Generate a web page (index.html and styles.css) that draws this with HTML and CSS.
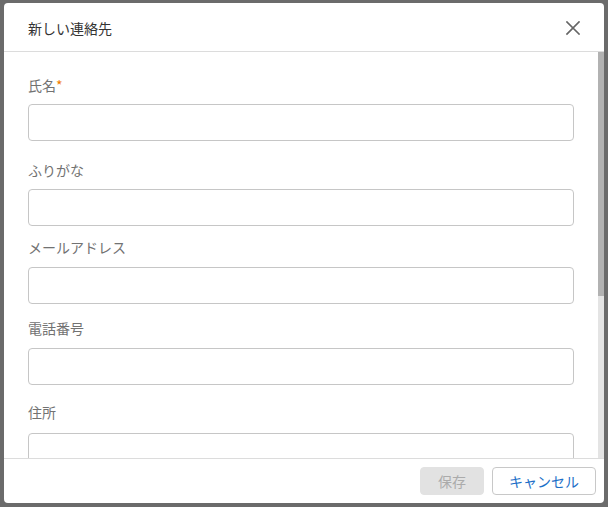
FILE: index.html
```html
<!DOCTYPE html>
<html lang="ja">
<head>
<meta charset="utf-8">
<title>新しい連絡先</title>
<link rel="stylesheet" href="styles.css">
</head>
<body>
<div class="backdrop">
  <div class="dialog">
    <header class="dialog-header">
      <h1 class="dialog-title">新しい連絡先</h1>
      <button class="close-btn" aria-label="閉じる">
        <svg width="16" height="16" viewBox="0 0 16 16"><path d="M2 2 L14 14 M14 2 L2 14" stroke="#666" stroke-width="1.7" fill="none" stroke-linecap="square"/></svg>
      </button>
    </header>
    <div class="dialog-body">
      <div class="form-area">
        <div class="field f1">
          <label class="label">氏名<span class="req">*</span></label>
          <div class="input"></div>
        </div>
        <div class="field f2">
          <label class="label">ふりがな</label>
          <div class="input"></div>
        </div>
        <div class="field f3">
          <label class="label">メールアドレス</label>
          <div class="input"></div>
        </div>
        <div class="field f4">
          <label class="label">電話番号</label>
          <div class="input"></div>
        </div>
        <div class="field f5">
          <label class="label">住所</label>
          <div class="input"></div>
        </div>
      </div>
      <div class="scroll-track"><div class="scroll-thumb"></div></div>
    </div>
    <footer class="dialog-footer">
      <button class="btn btn-save" disabled>保存</button>
      <button class="btn btn-cancel">キャンセル</button>
    </footer>
  </div>
</div>
</body>
</html>
```

FILE: styles.css
```css
html, body {
  margin: 0;
  padding: 0;
  height: 507px;
  overflow: hidden;
}
body {
  background: #6b6b6b;
  font-family: "Noto Sans CJK JP", "Noto Sans", sans-serif;
}
.backdrop {
  padding: 3px 4px 0 4px;
}
.dialog {
  width: 600px;
  height: 500px;
  background: #fff;
  border-radius: 4px;
  display: flex;
  flex-direction: column;
  overflow: hidden;
}
.dialog-header {
  height: 48px;
  flex: 0 0 48px;
  border-bottom: 1px solid #dcdcdc;
  display: flex;
  align-items: center;
  justify-content: space-between;
  padding: 0 23px 0 24px;
}
.dialog-title {
  margin: 0;
  font-size: 14px;
  font-weight: normal;
  color: #333;
  line-height: 20px;
  padding-top: 1px;
}
.close-btn {
  border: none;
  background: none;
  padding: 0;
  width: 16px;
  height: 16px;
  display: flex;
  margin-top: 1px;
}
.dialog-body {
  flex: 1;
  display: flex;
  overflow: hidden;
}
.form-area {
  flex: 1;
  padding: 23px 24px 0 24px;
  overflow: hidden;
}
.field {
  display: flex;
  flex-direction: column;
}
.label {
  font-size: 14px;
  line-height: 20px;
  color: #727272;
  margin-bottom: 9px;
}
.req {
  color: #f07c00;
}
.input {
  height: 35px;
  border: 1px solid #c6c6c6;
  border-radius: 4px;
}
.f2 { margin-top: 19px; }
.f3 { margin-top: 11px; }
.f3 .label { margin-bottom: 10px; }
.f4 { margin-top: 14px; }
.f4 .label { margin-bottom: 10px; }
.f5 { margin-top: 17px; }
.f5 .label { margin-bottom: 11px; }
.scroll-track {
  flex: 0 0 6px;
  width: 6px;
  background: #e4e4e4;
}
.scroll-thumb {
  height: 244px;
  background: #b2b2b2;
}
.dialog-footer {
  flex: 0 0 44px;
  height: 44px;
  border-top: 1px solid #dcdcdc;
  display: flex;
  justify-content: flex-end;
  align-items: center;
  gap: 8px;
  padding: 0 8px 0 8px;
}
.btn {
  height: 28px;
  font-family: "Noto Sans CJK JP", "Noto Sans", sans-serif;
  font-size: 14px;
  border-radius: 4px;
  padding: 0;
  line-height: 26px;
}
.btn-save {
  width: 64px;
  background: #e2e2e2;
  border: 1px solid #e2e2e2;
  color: #ababab;
}
.btn-cancel {
  width: 104px;
  background: #fff;
  border: 1px solid #c8c8c8;
  color: #1c6fc8;
}
```
